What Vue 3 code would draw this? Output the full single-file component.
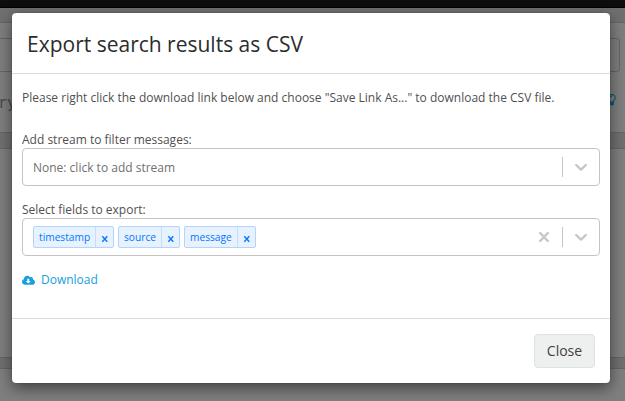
<script setup>
const fields = ['timestamp', 'source', 'message']
</script>

<template>
  <div class="page">
    <div class="backdrop">
      <div class="navbar"></div>
      <div class="gap gap-top"></div>
      <div class="panel search">
        <div class="search-box"></div>
        <div class="query-row">
          <span class="query">ry</span>
          <svg class="bulb" viewBox="0 0 8 12" width="8" height="12">
            <path d="M2.5 8 C2.5 6.5 .8 5.8 .8 3.8 A3.2 3.2 0 0 1 7.2 3.8 C7.2 5.8 5.5 6.5 5.5 8 Z M4 2.2 A1.6 1.6 0 0 0 2.4 3.8" fill="none" stroke="#0c5570" stroke-width="1.1" />
            <path d="M2.2 8h3.6v2.4L4.8 11.5H3.2L2.2 10.4z" fill="#0c5570" />
          </svg>
        </div>
      </div>
      <div class="gap gap-mid"></div>
      <div class="panel results"></div>
      <div class="gap gap-low"></div>
      <div class="panel rest"></div>
    </div>

    <div class="modal" role="dialog">
      <header class="modal-header">
        <h4>Export search results as CSV</h4>
      </header>
      <section class="modal-body">
        <p class="hint">Please right click the download link below and choose "Save Link As..." to download the CSV file.</p>

        <label class="label">Add stream to filter messages:</label>
        <div class="select">
          <span class="placeholder">None: click to add stream</span>
          <span class="separator"></span>
          <svg class="chevron" viewBox="0 0 20 20" width="20" height="20">
            <path d="M5.2 8l4.8 4.6L14.8 8" />
          </svg>
        </div>

        <label class="label second">Select fields to export:</label>
        <div class="select">
          <div class="tags">
            <span v-for="field in fields" :key="field" class="tag" :class="field">
              <span class="tag-name">{{ field }}</span>
              <span class="tag-remove">
                <svg viewBox="0 0 8 8" width="8" height="8"><path d="M1.3 1.3l5 5.4M6.3 1.3l-5 5.4" /></svg>
              </span>
            </span>
          </div>
          <svg class="clear" viewBox="0 0 20 20" width="20" height="20">
            <path d="M6.2 6l7.6 8M13.8 6l-7.6 8" />
          </svg>
          <span class="separator"></span>
          <svg class="chevron" viewBox="0 0 20 20" width="20" height="20">
            <path d="M5.2 8l4.8 4.6L14.8 8" />
          </svg>
        </div>

        <a class="download">
          <svg viewBox="0 0 640 512" width="13" height="10.4">
            <path fill="#16a0dc" fill-rule="evenodd" d="M537.6 226.6c4.1-10.7 6.4-22.4 6.4-34.6 0-53-43-96-96-96-19.7 0-38.1 6-53.3 16.2C367 64.2 315.3 32 256 32c-88.4 0-160 71.6-160 160 0 2.7.1 5.4.2 8.1C40.2 219.8 0 273.2 0 336c0 79.5 64.5 144 144 144h368c70.7 0 128-57.3 128-128 0-61.9-44-113.6-102.4-125.4zM265 180h90v110h80L310 415 185 290h80z" />
          </svg>
          <span>Download</span>
        </a>
      </section>
      <footer class="modal-footer">
        <button class="close" type="button">Close</button>
      </footer>
    </div>
  </div>
</template>

<style>
body {
  margin: 0;
  overflow: hidden;
}
</style>

<style scoped>
.page {
  position: relative;
  width: 625px;
  height: 401px;
  overflow: hidden;
  font-family: "Open Sans", "Noto Sans", sans-serif;
  font-size: 12px;
  color: #505050;
}
.page * {
  box-sizing: border-box;
}
.backdrop {
  display: flex;
  flex-direction: column;
  height: 401px;
  background: #7f7f7f;
}
.navbar {
  height: 8px;
  background: #0e0e0e;
  border-bottom: 1px solid #000;
}
.gap {
  background: #707070;
}
.gap-top {
  height: 15px;
  border-bottom: 1px solid #666;
}
.gap-mid {
  height: 17px;
  border-top: 1px solid #656565;
  border-bottom: 1px solid #656565;
}
.gap-low {
  height: 12px;
  border-top: 1px solid #656565;
  border-bottom: 1px solid #656565;
}
.search {
  height: 109px;
  padding: 15px 5px 0 0;
}
.search-box {
  height: 34px;
  border: 1px solid #666;
  border-left: 0;
  border-radius: 0 4px 4px 0;
}
.query-row {
  display: flex;
  justify-content: space-between;
  padding: 19px 4px 0 0;
}
.query {
  margin-left: -2px;
  font-family: "DejaVu Sans Mono", monospace;
  font-size: 15px;
  line-height: 24px;
  color: #484848;
}
.bulb {
  margin-top: 3px;
}
.results {
  height: 208px;
}
.modal {
  position: absolute;
  left: 12px;
  top: 13px;
  width: 598px;
  height: 370px;
  display: flex;
  flex-direction: column;
  background: #fff;
  border-radius: 4px;
  box-shadow: 0 0 1px rgba(0, 0, 0, 0.6), 0 5px 15px rgba(0, 0, 0, 0.5);
}
.modal-header {
  height: 61px;
  padding: 15px;
  border-bottom: 1px solid #d9d9db;
}
h4 {
  margin: 0;
  font-size: 21px;
  font-weight: 400;
  line-height: 32px;
  color: #2c2c2c;
}
.modal-body {
  flex: 1;
  padding: 15px 10px 0;
}
.hint {
  margin: 0;
  line-height: 18px;
}
.label {
  display: block;
  margin-top: 24px;
  line-height: 17px;
}
.label.second {
  margin-top: 15px;
}
.select {
  display: flex;
  align-items: center;
  height: 38px;
  padding: 0 8px 0 10px;
  border: 1px solid #c4c4c4;
  border-radius: 4px;
}
.placeholder {
  flex: 1;
  color: #707070;
}
.tags {
  flex: 1;
  display: flex;
  gap: 4px;
}
.tag {
  display: flex;
  height: 22px;
  border: 1px solid #b0d5ff;
  border-radius: 2px;
  background: #e8f2ff;
  color: #0078ff;
}
.tag-name {
  flex: 1;
  min-width: 0;
  padding-left: 5px;
  font-size: 10.2px;
  font-weight: 500;
  line-height: 20px;
}
.timestamp {
  width: 81px;
}
.source {
  width: 62px;
}
.message {
  width: 72px;
}
.tag-remove {
  display: flex;
  flex: none;
  align-items: center;
  width: 18px;
  padding: 3px 0 0 5px;
  border-left: 1px solid #c2dfff;
}
.tag-remove path {
  stroke: #0078ff;
  stroke-width: 1.4;
}
.separator {
  width: 1px;
  height: 20px;
  background: #c4c4c4;
}
.chevron {
  margin-left: 8px;
}
.clear {
  margin-right: 8px;
}
.chevron path,
.clear path {
  fill: none;
  stroke: #c6c6c6;
  stroke-width: 2.4;
  stroke-linecap: round;
  stroke-linejoin: round;
}
.download {
  display: flex;
  align-items: center;
  gap: 6px;
  margin-top: 15px;
  line-height: 18px;
  color: #16a0dc;
}
.modal-footer {
  display: flex;
  justify-content: flex-end;
  height: 65px;
  padding: 15px;
  border-top: 1px solid #d9dadd;
}
.close {
  width: 61px;
  height: 34px;
  padding: 0 0 2px;
  border: 1px solid #dfe2e2;
  border-radius: 4px;
  background: #eef0f0;
  color: #404040;
  font-family: inherit;
  font-size: 14px;
}
</style>
